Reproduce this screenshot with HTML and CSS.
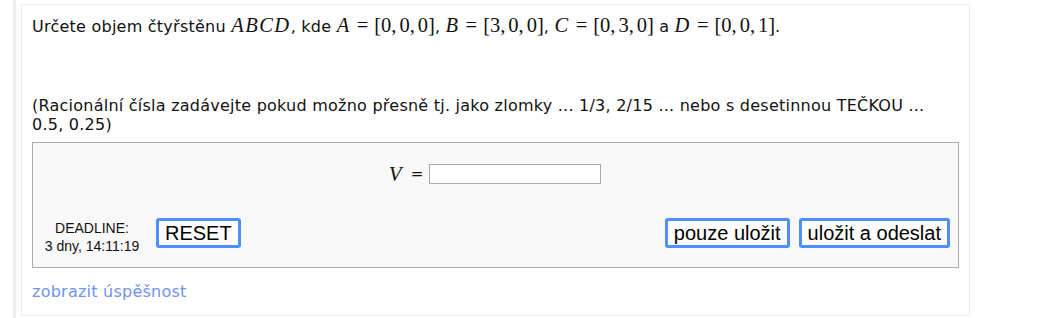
FILE: index.html
```html
<!DOCTYPE html>
<html lang="cs">
<head>
<meta charset="utf-8">
<title>Úloha</title>
<link rel="stylesheet" href="styles.css">
</head>
<body>
<div class="page">
  <div class="stripe"></div>
  <div class="card">
    <p class="q">Určete objem čtyřstěnu <span class="m"><i>ABCD</i></span>, kde <span class="m"><i>A</i><span class="rel">=</span>[0,<span class="th"></span>0,<span class="th"></span>0]</span>, <span class="m"><i>B</i><span class="rel">=</span>[3,<span class="th"></span>0,<span class="th"></span>0]</span>, <span class="m"><i>C</i><span class="rel">=</span>[0,<span class="th"></span>3,<span class="th"></span>0]</span> a <span class="m"><i>D</i><span class="rel">=</span>[0,<span class="th"></span>0,<span class="th"></span>1]</span>.</p>
    <p class="note">(Racionální čísla zadávejte pokud možno přesně tj. jako zlomky ... 1/3, 2/15 ... nebo s desetinnou TEČKOU ... 0.5, 0.25)</p>
    <div class="box">
      <div class="eq">
        <span class="m"><i>V</i></span>
        <span class="eqsign">=</span>
        <input class="answer" type="text">
      </div>
      <div class="actions">
        <div class="deadline">
          <div>DEADLINE:</div>
          <div>3 dny, 14:11:19</div>
        </div>
        <button class="btn" type="button">RESET</button>
        <div class="spacer"></div>
        <button class="btn" type="button">pouze uložit</button>
        <button class="btn" type="button">uložit a odeslat</button>
      </div>
    </div>
    <a class="link" href="#">zobrazit úspěšnost</a>
  </div>
</div>
</body>
</html>
```

FILE: styles.css
```css
html, body {
  margin: 0;
  padding: 0;
  background: #fff;
}
body {
  font-family: "DejaVu Sans", Verdana, sans-serif;
  font-size: 16px;
  letter-spacing: 0.24px;
  color: #111;
}
.page {
  display: flex;
  align-items: flex-start;
  min-height: 318px;
}
.stripe {
  width: 3px;
  margin-left: 13px;
  align-self: stretch;
  background: #ededed;
}
.card {
  margin-left: 5px;
  margin-top: 4px;
  width: 927px;
  padding: 10px 10px 14px 10px;
  border: 1px solid #ececec;
  display: flex;
  flex-direction: column;
}
.q {
  margin: 0;
  line-height: 19px;
}
.m {
  font-family: "Liberation Serif", "Times New Roman", serif;
  font-size: 20.5px;
  line-height: 1;
  letter-spacing: 0;
  white-space: nowrap;
}
.m i {
  font-style: italic;
  letter-spacing: 1.5px;
}
.rel {
  margin: 0 6px;
}
.th {
  display: inline-block;
  width: 3px;
}
.note {
  margin: 60px 0 0 0;
  padding-right: 28px;
  line-height: 19px;
}
.box {
  margin-top: 8px;
  border: 1px solid #ababab;
  background: #f9f9f9;
  padding: 0 8px 12px 10px;
}
.eq {
  margin-top: 21px;
  margin-right: 3px;
  display: flex;
  align-items: center;
  justify-content: center;
  height: 20px;
}
.eq .m {
  font-size: 21px;
}
.eq .m i {
  letter-spacing: 0;
}
.eqsign {
  font-size: 15px;
  letter-spacing: 0;
  margin: 0 6px 0 9px;
}
.answer {
  box-sizing: border-box;
  width: 172px;
  height: 20px;
  margin: 0;
  border: 1px solid #aaa;
  background: #fff;
  padding: 0 2px;
}
.actions {
  margin-top: 34px;
  display: flex;
  align-items: flex-start;
}
.deadline {
  font-family: "Liberation Sans", Arial, sans-serif;
  font-size: 14px;
  letter-spacing: 0;
  line-height: 18px;
  min-width: 98px;
  margin-top: 1px;
  text-align: center;
  color: #111;
  margin-right: 15px;
}
.spacer {
  flex: 1;
}
.btn {
  font-family: "Liberation Sans", Arial, sans-serif;
  font-size: 20px;
  letter-spacing: 0;
  line-height: 24px;
  height: 30px;
  padding: 0 6px;
  margin: 0;
  border: 3px solid #4d8ffb;
  border-radius: 3px;
  background: #fff;
  color: #000;
}
.btn + .btn {
  margin-left: 9px;
}
.link {
  margin-top: 14px;
  color: #6f93f3;
  text-decoration: none;
  line-height: 19px;
  align-self: flex-start;
}
```
